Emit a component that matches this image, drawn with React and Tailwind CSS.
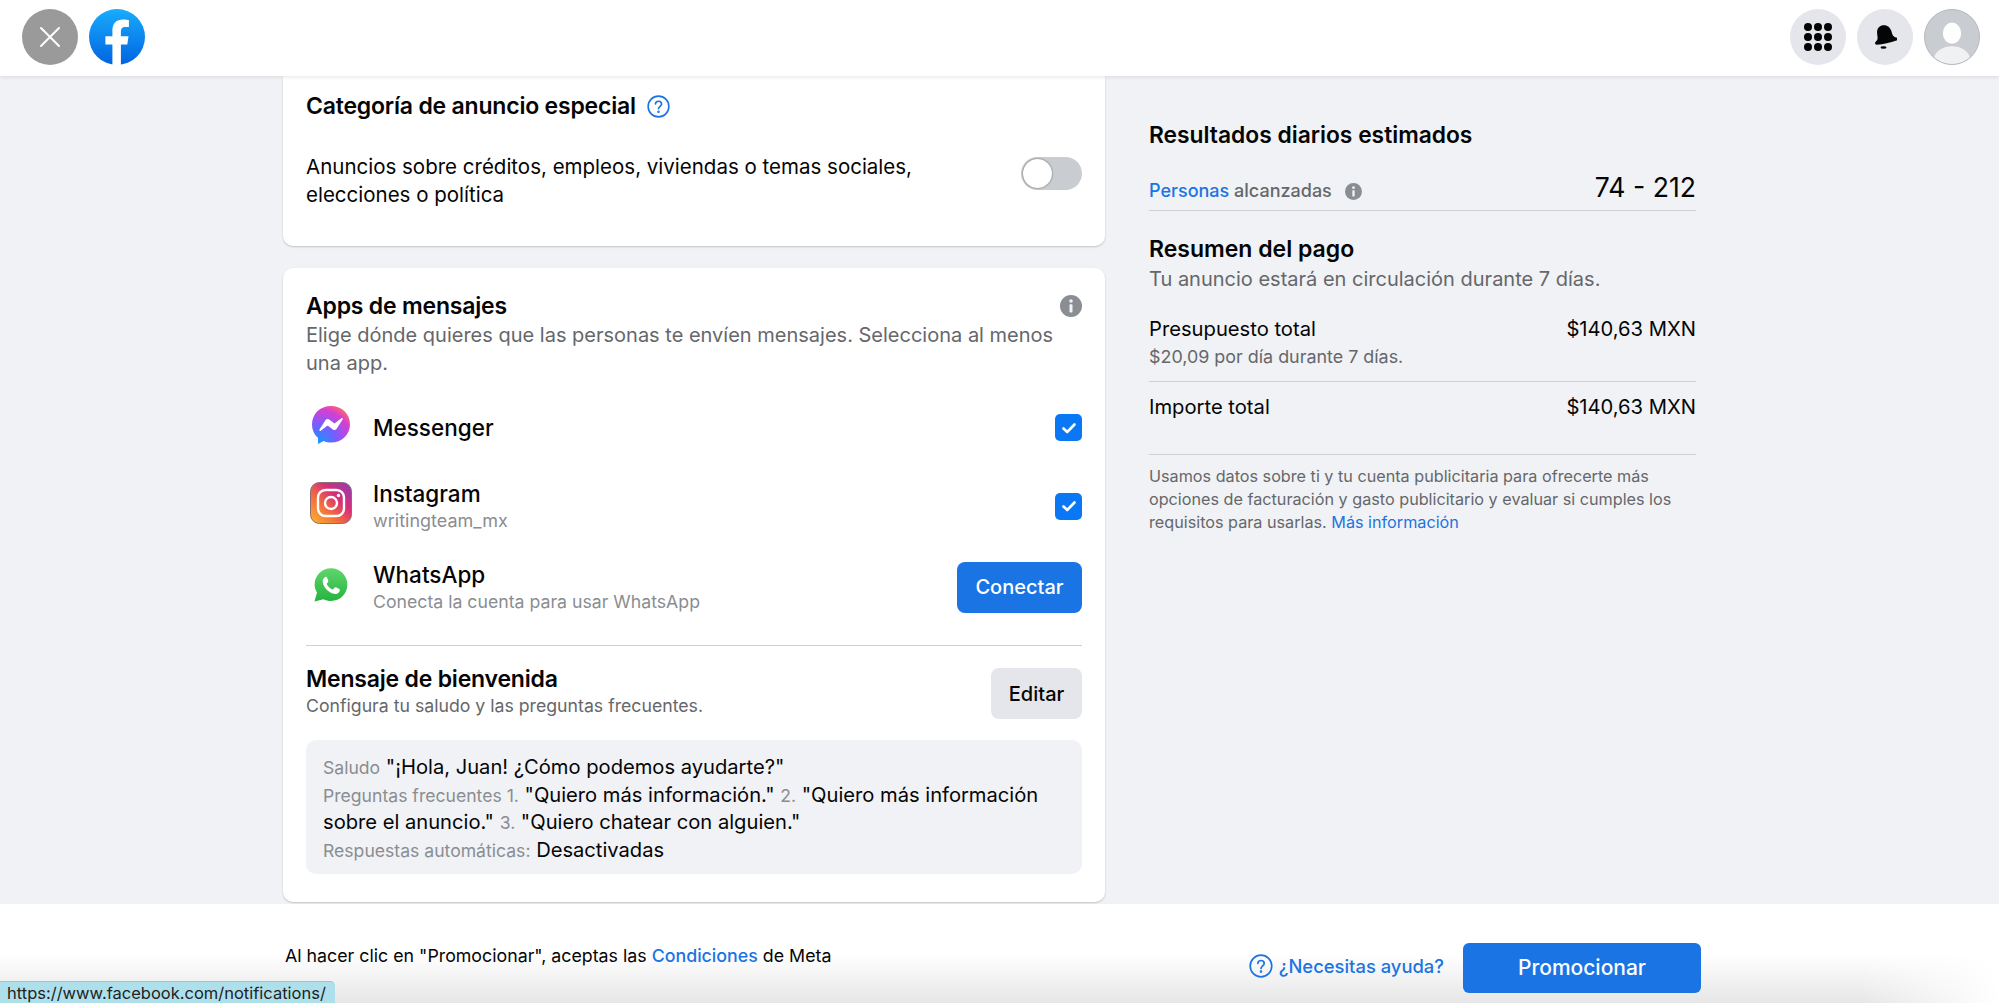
import React from 'react'

const FbLogo = () => (
    <svg viewBox="0 0 56 56" className="w-14 h-14">
        <defs>
            <linearGradient id="fb" x1="0" y1="0" x2="0" y2="1">
                <stop offset="0" stopColor="#18acfe" />
                <stop offset="1" stopColor="#0163e0" />
            </linearGradient>
        </defs>
        <circle cx="28" cy="28" r="28" fill="url(#fb)" />
        <path d="M23.4 56V35.5H16.4V27.2H23.4V21.4C23.4 14.5 27.5 10.6 33.8 10.6C36.8 10.6 39.9 11.2 39.9 11.2V17.9H36.4C33 17.9 31.9 20 31.9 22.2V27.2H39.5L38.3 35.5H31.9V56Z" fill="#fff" />
    </svg>
)

const GridIcon = () => (
    <svg viewBox="0 0 28 28" className="w-7 h-7" fill="#050505">
        {[4, 14, 24].map((y) =>
            [4, 14, 24].map((x) => <circle key={x + '-' + y} cx={x} cy={y} r="4" />)
        )}
    </svg>
)

const BellIcon = () => (
    <svg viewBox="0 0 24 26" className="w-6 h-[26px]" fill="#050505">
        <path transform="rotate(-12 12 11)" d="M11.5 1C16 1 18.6 4.2 19 8.2L19.4 12C19.6 14 21 15 22.6 15.8C24 16.5 23.6 18.6 22 18.8C15.5 19.8 8.5 19.8 2 18.8C0.4 18.6 0 16.6 1.3 15.8C2.8 15 4 13.8 4.2 12L4.6 8C5 4 7.4 1 11.5 1Z" />
        <ellipse cx="10.5" cy="23.5" rx="3" ry="1.2" />
    </svg>
)

const Avatar = () => (
    <div className="w-14 h-14 rounded-full bg-[#c9ccd1] border border-[#b5b8bd] overflow-hidden">
        <svg viewBox="0 0 56 56" className="w-full h-full">
            <ellipse cx="28" cy="24" rx="9.5" ry="11" fill="#fff" />
            <path d="M9 50C11 42 19 37.5 28 37.5C37 37.5 45 42 47 50C42 54 35 56 28 56C21 56 14 54 9 50Z" fill="#f0f1f2" />
        </svg>
    </div>
)

const Messenger = () => (
    <svg viewBox="0 0 40 40" className="w-10 h-10">
        <defs>
            <radialGradient id="ms" cx="0.15" cy="1" r="1.15">
                <stop offset="0" stopColor="#0a9cff" />
                <stop offset="0.45" stopColor="#7a5cff" />
                <stop offset="0.8" stopColor="#d63fd0" />
                <stop offset="1" stopColor="#ff6a68" />
            </radialGradient>
        </defs>
        <path d="M20 1C9 1 1 9 1 19.5C1 25 3.2 29.7 7 33V39L12.6 36C15 37 17.4 37.6 20 37.6C31 37.6 39 29.6 39 19.3C39 9 31 1 20 1Z" fill="url(#ms)" />
        <path d="M8.5 24.5L14.6 15C15.4 13.8 17 13.5 18.2 14.4L22.8 17.9C23.2 18.2 23.8 18.2 24.2 17.9L30.4 13.2C31.2 12.6 32.2 13.5 31.6 14.4L25.5 23.9C24.7 25.1 23.1 25.4 21.9 24.5L17.3 21C16.9 20.7 16.3 20.7 15.9 21L9.7 25.7C8.9 26.3 7.9 25.4 8.5 24.5Z" fill="#fff" />
    </svg>
)

const Instagram = () => (
    <svg viewBox="0 0 42 42" className="w-[42px] h-[42px]">
        <defs>
            <linearGradient id="ig" x1="0" y1="1" x2="1" y2="0">
                <stop offset="0" stopColor="#fdb92e" />
                <stop offset="0.35" stopColor="#f4713a" />
                <stop offset="0.65" stopColor="#d62e78" />
                <stop offset="1" stopColor="#8a3fb5" />
            </linearGradient>
        </defs>
        <rect x="0.5" y="0.5" width="41" height="41" rx="9" fill="url(#ig)" stroke="#8a6d75" />
        <rect x="8" y="8" width="26" height="26" rx="7.5" fill="none" stroke="#fff" strokeWidth="2.4" />
        <circle cx="21" cy="21" r="6" fill="none" stroke="#fff" strokeWidth="2.4" />
        <circle cx="28.5" cy="13.5" r="1.7" fill="#fff" />
    </svg>
)

const Whatsapp = () => (
    <svg viewBox="0 0 36 36" className="w-9 h-9">
        <defs>
            <linearGradient id="wa" x1="0" y1="0" x2="0" y2="1">
                <stop offset="0" stopColor="#5fd66c" />
                <stop offset="1" stopColor="#26b33f" />
            </linearGradient>
        </defs>
        <path d="M1.5 34.5L4 25.5C2.4 22.9 1.6 20.4 1.6 17.6C1.6 8.4 9 1.2 18 1.2C27 1.2 34.4 8.4 34.4 17.6C34.4 26.8 27 34 18 34C15.4 34 12.8 33.4 10.4 32.2Z" fill="url(#wa)" />
        <path d="M13.4 9.8C12.8 9.8 12 10 11.3 10.8C10.4 11.8 9.4 13.2 9.8 15.4C10.4 19 12.6 21.8 15 23.8C17.6 26 20.4 27 22.4 27C24.4 27 26 25.8 26.6 24.2C26.9 23.3 26.9 22.6 26.7 22.3C26.4 21.9 23.2 20.3 22.6 20.2C22 20.1 21.6 20.4 21.2 21C20.8 21.6 20.2 22.4 19.7 22.4C18.8 22.4 17.2 21.4 15.8 20C14.6 18.8 13.8 17.4 13.8 16.8C13.8 16.2 14.6 15.8 15 15.2C15.4 14.6 15.4 14.2 15.2 13.6C15 13 14.2 10.8 13.9 10.2C13.8 9.9 13.6 9.8 13.4 9.8Z" fill="#fff" />
    </svg>
)

const InfoDot = ({ size }) => (
    <svg viewBox="0 0 16 16" className={size}>
        <circle cx="8" cy="8" r="8" fill="#8a8d91" />
        <circle cx="8" cy="4.4" r="1.3" fill="#f0f2f5" />
        <rect x="6.9" y="6.8" width="2.2" height="6" rx="0.6" fill="#f0f2f5" />
    </svg>
)

const HelpIcon = ({ size }) => (
    <svg viewBox="0 0 24 24" className={size} fill="none" stroke="#1b74e4" strokeWidth="1.7" strokeLinecap="round">
        <circle cx="12" cy="12" r="10.8" />
        <path d="M8.8 9.3C9 7.5 10.4 6.5 12 6.5C13.8 6.5 15.2 7.7 15.2 9.4C15.2 11.6 12 12 12 14.4" />
        <circle cx="12" cy="17.6" r="0.5" fill="#1b74e4" />
    </svg>
)

const Check = () => (
    <div className="w-[27px] h-[27px] rounded-[5px] bg-[#0a78f5] flex items-center justify-center">
        <svg viewBox="0 0 16 16" className="w-4 h-4" fill="none" stroke="#fff" strokeWidth="2.6" strokeLinecap="round" strokeLinejoin="round">
            <path d="M2.5 8.5L6.2 12L13.5 4.5" />
        </svg>
    </div>
)

const App = () => {
    return (
        <div className="relative w-[1999px] h-[1003px] overflow-hidden bg-white flex flex-col font-['Inter',sans-serif] text-[#050505]">
            {/* barra superior */}
            <div className="relative z-10 h-[76px] shrink-0 bg-white shadow-[0_1px_4px_rgba(0,0,0,0.1)] flex items-center justify-between pl-[22px] pr-[19px] pb-[2px]">
                <div className="flex items-center gap-[11px]">
                    <div className="w-14 h-14 rounded-full bg-[#9a9a9a] flex items-center justify-center">
                        <svg viewBox="0 0 24 24" className="w-6 h-6" fill="none" stroke="#fff" strokeWidth="2" strokeLinecap="round">
                            <path d="M3 3L21 21M21 3L3 21" />
                        </svg>
                    </div>
                    <FbLogo />
                </div>
                <div className="flex items-center gap-[11px]">
                    <div className="w-14 h-14 rounded-full bg-[#e4e6eb] flex items-center justify-center"><GridIcon /></div>
                    <div className="w-14 h-14 rounded-full bg-[#e4e6eb] flex items-center justify-center"><BellIcon /></div>
                    <Avatar />
                </div>
            </div>

            <div className="h-[828px] shrink-0 bg-[#f0f2f5] flex pl-[283px] overflow-hidden">
                {/* columna izquierda */}
                <div className="w-[822px] shrink-0 flex flex-col gap-[22px]">
                    <div className="h-[170px] shrink-0 bg-white rounded-b-[10px] shadow-[0_1px_2px_rgba(0,0,0,0.2)] px-[23px] pt-[15px]">
                        <div className="flex items-center gap-[11px] h-[30px]">
                            <span className="text-[23px] leading-[30px] font-semibold tracking-[-0.2px]">Categoría de anuncio especial</span>
                            <HelpIcon size="w-[23px] h-[23px]" />
                        </div>
                        <div className="flex items-start justify-between mt-[32px]">
                            <div className="w-[640px] text-[20.5px] leading-[28px]">
                                Anuncios sobre créditos, empleos, viviendas o temas sociales, elecciones o política
                            </div>
                            <div className="w-[61px] h-[33px] mt-[4px] rounded-full bg-[#c9ccd1] p-[2px]">
                                <div className="w-[29px] h-[29px] rounded-full bg-white shadow-[0_0_2px_rgba(0,0,0,0.6)]"></div>
                            </div>
                        </div>
                    </div>

                    <div className="h-[634px] shrink-0 bg-white rounded-[10px] shadow-[0_1px_2px_rgba(0,0,0,0.2)] px-[23px] pt-[23px]">
                        <div className="flex items-center justify-between h-[30px]">
                            <span className="text-[23px] leading-[30px] font-semibold tracking-[-0.2px]">Apps de mensajes</span>
                            <InfoDot size="w-[22px] h-[22px]" />
                        </div>
                        <div className="w-[776px] mt-[1px] text-[20px] leading-[27.5px] text-[#65676b]">
                            Elige dónde quieres que las personas te envíen mensajes. Selecciona al menos una app.
                        </div>

                        <div className="flex items-center mt-[28px] h-[45px]">
                            <div className="w-[67px] pl-[5px] mb-[5px] shrink-0"><Messenger /></div>
                            <div className="flex-1 text-[22.5px] font-medium">Messenger</div>
                            <Check />
                        </div>

                        <div className="flex items-center mt-[26px] h-[60px]">
                            <div className="w-[67px] pl-[4px] mb-[6px] shrink-0"><Instagram /></div>
                            <div className="flex-1">
                                <div className="text-[22.5px] leading-[30px] font-medium">Instagram</div>
                                <div className="text-[18px] leading-[24px] text-[#8a8d91]">writingteam_mx</div>
                            </div>
                            <Check />
                        </div>

                        <div className="flex items-center mt-[21px] h-[60px]">
                            <div className="w-[67px] pl-[7px] mb-[5px] shrink-0"><Whatsapp /></div>
                            <div className="flex-1">
                                <div className="text-[22.5px] leading-[30px] font-medium">WhatsApp</div>
                                <div className="text-[17.7px] leading-[24px] text-[#8a8d91]">Conecta la cuenta para usar WhatsApp</div>
                            </div>
                            <div className="w-[125px] h-[51px] rounded-[8px] bg-[#1b74e4] text-white text-[20px] font-medium flex items-center justify-center">Conectar</div>
                        </div>

                        <div className="h-px bg-[#ced0d4] mt-[28px]"></div>

                        <div className="flex items-start justify-between mt-[18px] h-[55px]">
                            <div>
                                <div className="text-[23px] leading-[30px] font-semibold tracking-[-0.2px]">Mensaje de bienvenida</div>
                                <div className="text-[17.7px] leading-[24px] text-[#65676b]">Configura tu saludo y las preguntas frecuentes.</div>
                            </div>
                            <div className="w-[91px] h-[51px] mt-[4px] rounded-[8px] bg-[#e4e6eb] text-[20px] font-medium flex items-center justify-center">Editar</div>
                        </div>

                        <div className="h-[134px] mt-[21px] rounded-[10px] bg-[#f0f2f5] px-[17px] pt-[13px] text-[20.15px] leading-[27.5px]">
                            <div><span className="text-[17.6px] leading-[20px] text-[#8a8d91]">Saludo</span> "¡Hola, Juan! ¿Cómo podemos ayudarte?"</div>
                            <div>
                                <span className="text-[17.6px] leading-[20px] text-[#8a8d91]">Preguntas frecuentes 1.</span> "Quiero más información." <span className="text-[17.6px] leading-[20px] text-[#8a8d91]">2.</span> "Quiero más información sobre el anuncio." <span className="text-[17.6px] leading-[20px] text-[#8a8d91]">3.</span> "Quiero chatear con alguien."
                            </div>
                            <div><span className="text-[17.6px] leading-[20px] text-[#8a8d91]">Respuestas automáticas:</span> Desactivadas</div>
                        </div>
                    </div>
                </div>

                {/* columna derecha */}
                <div className="w-[547px] shrink-0 ml-[44px] pt-[44px]">
                    <div className="text-[22.8px] leading-[30px] font-semibold">Resultados diarios estimados</div>
                    <div className="flex items-end justify-between mt-[15px] pb-[4px] border-b border-[#ced0d4] h-[46px]">
                        <div className="flex items-center gap-[13px] text-[18px] leading-[26px] pb-[2px]">
                            <span className="font-medium"><span className="text-[#1b74e4]">Personas</span> <span className="text-[#65676b]">alcanzadas</span></span>
                            <InfoDot size="w-[17px] h-[17px]" />
                        </div>
                        <div className="text-[26.6px] leading-[36px] pb-[1px]">74 - 212</div>
                    </div>
                    <div className="text-[23px] leading-[30px] font-semibold mt-[23px]">Resumen del pago</div>
                    <div className="text-[20px] leading-[28px] text-[#65676b] mt-[1px]">Tu anuncio estará en circulación durante 7 días.</div>
                    <div className="flex justify-between mt-[22px] text-[20.2px] leading-[28px]">
                        <span>Presupuesto total</span>
                        <span>$140,63 MXN</span>
                    </div>
                    <div className="text-[17.9px] leading-[28px] text-[#65676b] pb-[10px] border-b border-[#ced0d4]">$20,09 por día durante 7 días.</div>
                    <div className="flex justify-between mt-[11px] text-[20.2px] leading-[28px]">
                        <span>Importe total</span>
                        <span>$140,63 MXN</span>
                    </div>
                    <div className="h-px bg-[#ced0d4] mt-[33px]"></div>
                    <div className="text-[16.2px] leading-[23px] text-[#65676b] mt-[10px]">
                        Usamos datos sobre ti y tu cuenta publicitaria para ofrecerte más opciones de facturación y gasto publicitario y evaluar si cumples los requisitos para usarlas. <span className="text-[#1b74e4]">Más información</span>
                    </div>
                </div>
            </div>

            {/* pie */}
            <div className="relative flex-1 bg-gradient-to-b from-white from-50% to-[#e6e6e6] flex items-start pl-[285px] pr-[298px]">
                <div className="mt-[40px] text-[17.8px] leading-[24px]">
                    Al hacer clic en "Promocionar", aceptas las <span className="font-medium text-[#1b74e4]">Condiciones</span> de Meta
                </div>
                <div className="ml-auto flex items-center gap-[19px] mt-[39px]">
                    <div className="flex items-center gap-[6px] mt-[-3px]">
                        <HelpIcon size="w-[24px] h-[24px]" />
                        <span className="text-[18.4px] font-medium text-[#1b74e4]">¿Necesitas ayuda?</span>
                    </div>
                    <div className="w-[238px] h-[50px] rounded-[6px] bg-[#1b74e4] text-white text-[21px] font-medium flex items-center justify-center">Promocionar</div>
                </div>
                <div className="absolute right-0 bottom-0 w-[140px] h-[50px] bg-gradient-to-r from-transparent to-white"></div>
            </div>

            {/* url de estado */}
            <div className="absolute left-0 bottom-0 w-[335px] h-[22px] rounded-tr-[5px] bg-[#aee0ec] border-t border-[#9cc5cf] pl-[7px] text-[16.5px] leading-[22px] text-[#222]">
                https://www.facebook.com/notifications/
            </div>
        </div>
    )
}

export default App
